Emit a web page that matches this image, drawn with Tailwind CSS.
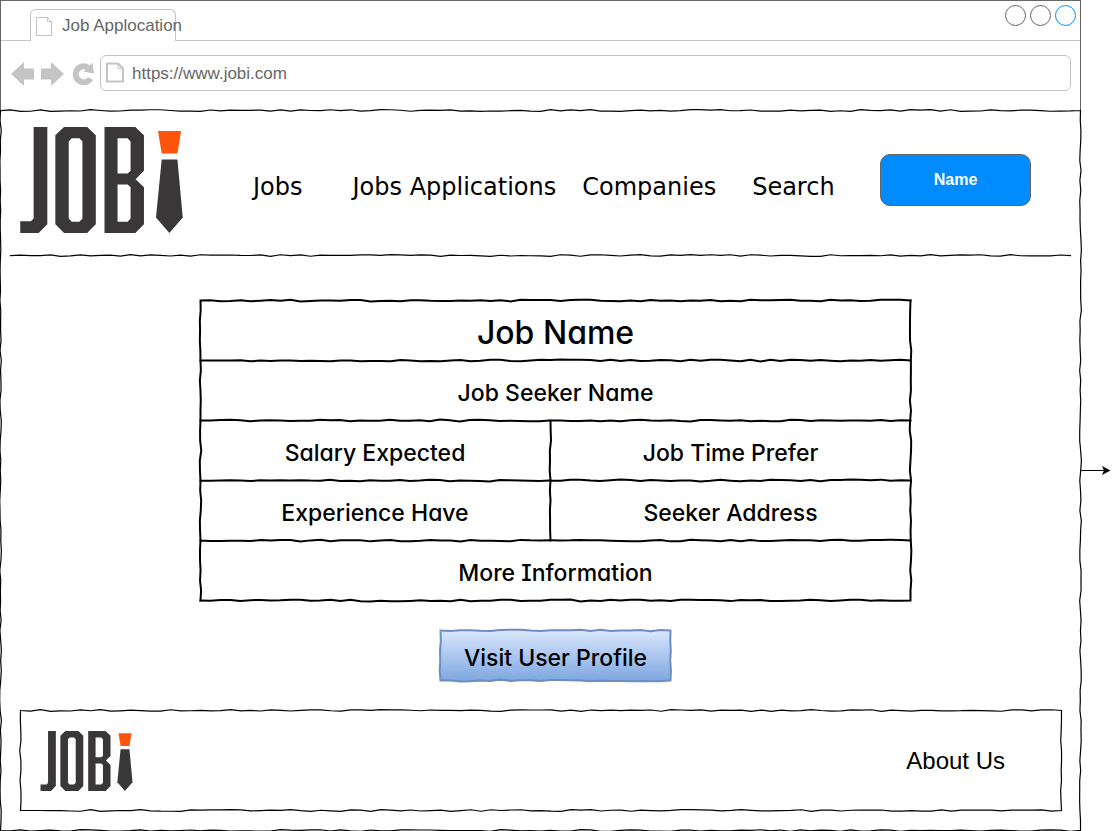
<!DOCTYPE html>
<html lang="en">
<head>
<meta charset="utf-8">
<meta name="viewport" content="width=device-width, initial-scale=1">
<title>Job Applocation</title>
<script src="https://cdn.jsdelivr.net/npm/@tailwindcss/browser@4"></script>
</head>
<body class="bg-white font-['Liberation_Sans',Arial,sans-serif] text-black">
<svg class="hidden" aria-hidden="true">
  <symbol id="logo" viewBox="60 50 486 317">
    <g fill="#393738">
      <path d="M100 50H141V341L115 367H60V332H92L100 324Z"/>
      <path fill-rule="evenodd" d="M191 50H260L286 75V341L260 367H191L165 341V75ZM214 84L205 93V324L214 333H237L246 324V93L237 84Z"/>
      <path fill-rule="evenodd" d="M312 50H404L430 75V181L405 206L430 230V341L404 367H312ZM351 84V189H381L390 181V93L381 84ZM351 222V333H381L390 324V230L381 222Z"/>
      <path d="M483 147H530L546 321L506 367L466 321Z"/>
    </g>
    <path fill="#ff540b" d="M472 62H541L530 129H483Z"/>
  </symbol>
</svg>
<div class="flex min-h-screen items-stretch">
  <div class="flex min-w-0 flex-1 flex-col">
    <header class="border border-b-0 border-[#666] text-[17px] leading-5 text-[#666]">
      <div class="flex h-10 items-end justify-between border-b border-[#c4c4c4] pl-[29px] pr-1">
        <div class="-mb-px flex h-8 w-[146px] items-center gap-2.5 rounded-t-md border border-b-0 border-[#c4c4c4] bg-white pl-[5px] whitespace-nowrap">
          <svg class="h-5 w-4 shrink-0" viewBox="0 0 16 20" fill="none" stroke="#c4c4c4"><path d="M.5 1.5H11.5L15.5 5.5V19.5H.5ZM11.5 1.5V5.5H15.5"/></svg>
          <span>Job Applocation</span>
        </div>
        <div class="flex gap-1 self-start pt-1">
          <button aria-label="Minimize" class="size-[21px] rounded-full border border-[#666]"></button>
          <button aria-label="Maximize" class="size-[21px] rounded-full border border-[#666]"></button>
          <button aria-label="Close" class="size-[21px] rounded-full border border-[#008cff]"></button>
        </div>
      </div>
      <div class="flex h-[69px] items-center pr-[9px] pb-1.5 pl-2.5">
        <button aria-label="Back" class="mr-[7px] shrink-0 pt-0.5"><svg class="h-[26px] w-[23px]" viewBox="0 0 23 26" fill="#c4c4c4"><path d="M0 13L13 1V7.500H23V18.500H13V25Z"/></svg></button>
        <button aria-label="Forward" class="mr-2 shrink-0 pt-0.5"><svg class="h-[26px] w-[23px]" viewBox="0 0 23 26" fill="#c4c4c4"><path d="M23 13L10 1V7.500H0V18.500H10V25Z"/></svg></button>
        <button aria-label="Reload" class="mr-1.5 shrink-0 pt-0.5"><svg class="h-[26px] w-[22px]" viewBox="0 0 22 26"><path d="M18.500 17.500A8 8 0 1 1 16 6.500" fill="none" stroke="#c4c4c4" stroke-width="6"/><path d="M20.500 1.500L22 12.500L11.500 10.500Z" fill="#c4c4c4"/></svg></button>
        <label class="flex h-9 min-w-0 flex-1 items-center gap-2 rounded-md border border-[#c4c4c4] pl-[5px]">
          <svg class="h-[21px] w-[18px] shrink-0" viewBox="0 0 18 21" fill="none" stroke="#c4c4c4"><path stroke-width="2" d="M1 1.500H12L17 6.500V19.500H1Z"/><path d="M12 1.500V6.500H17"/></svg>
          <input type="text" aria-label="Address" value="https://www.jobi.com" class="h-6 min-w-0 flex-1 bg-transparent pt-0.5 outline-none">
        </label>
      </div>
    </header>

    <div class="relative flex flex-1 flex-col px-2.5 pb-5" data-sketch="top left right bottom">
      <div class="relative flex h-[146px] items-center justify-between pr-10 pb-1.5 pl-2.5" data-sketch="bottom">
        <svg class="h-[106px] w-[163px] shrink-0" role="img" aria-label="Jobi"><use href="#logo"/></svg>
        <nav class="mr-auto ml-[70px] flex items-center pt-3.5 font-['DejaVu_Sans',Verdana,sans-serif] text-2xl whitespace-nowrap">
          <a href="#" class="mr-[50px]">Jobs</a>
          <a href="#" class="mr-[26px]">Jobs Applications</a>
          <a href="#" class="mr-9">Companies</a>
          <a href="#">Search</a>
        </nav>
        <button class="h-[52px] w-[151px] shrink-0 rounded-[10px] border border-[#666] bg-[#008cff] text-base font-bold text-white">Name</button>
      </div>

      <main class="flex flex-1 flex-col items-center pt-11 pl-[30px] font-['Comic_Sans_MS','Inter',sans-serif] text-[23px] font-medium [font-feature-settings:'cv11','cv08']">
        <div class="relative w-full max-w-[711px]" data-sketch="right bottom" data-weight="2">
          <table class="w-full table-fixed text-center">
            <colgroup><col class="w-[350px]"><col></colgroup>
            <tbody>
              <tr class="h-[60px]"><th colspan="2" class="relative pt-1.5 text-[32px] font-medium" data-sketch="top left" data-weight="2">Job Name</th></tr>
              <tr class="h-[60px]"><td colspan="2" class="relative pt-1.5" data-sketch="top left" data-weight="2">Job Seeker Name</td></tr>
              <tr class="h-[60px]"><td class="relative pt-1.5" data-sketch="top left" data-weight="2">Salary Expected</td><td class="relative pt-1.5" data-sketch="top left" data-weight="2">Job Time Prefer</td></tr>
              <tr class="h-[60px]"><td class="relative pt-1.5" data-sketch="top left" data-weight="2">Experience Have</td><td class="relative pt-1.5" data-sketch="top left" data-weight="2">Seeker Address</td></tr>
              <tr class="h-[60px]"><td colspan="2" class="relative pt-1.5" data-sketch="top left" data-weight="2">More Information</td></tr>
            </tbody>
          </table>
        </div>
        <button class="relative mt-[30px] h-[51px] w-[231px] bg-linear-to-b from-[#dae8fc] to-[#7ea6e0] pt-1.5 whitespace-nowrap" data-sketch="top right bottom left" data-weight="2" data-color="#6c8ebf">Visit User Profile</button>
      </main>

      <footer class="relative mr-[9px] ml-2.5 flex h-[101px] items-center justify-between pr-[57px] pl-5 text-2xl" data-sketch="top right bottom left">
        <svg class="h-[60px] w-[93px]" role="img" aria-label="Jobi"><use href="#logo"/></svg>
        <a href="#">About Us</a>
      </footer>
    </div>
  </div>
  <div class="flex w-[38px] shrink-0 flex-col pt-[465px]">
    <svg class="h-3 w-[30px]" viewBox="0 0 30 12"><path d="M0 5.500H24" stroke="#000"/><path d="M29.500 5.500L21 10L23 5.500L21 1Z"/></svg>
  </div>
</div>
<script>
  // Hand-drawn borders: each listed side becomes a slightly wavering line.
  const NS = 'http://www.w3.org/2000/svg';
  let seed = 1;
  const rand = () => (seed = (seed * 16807) % 2147483647) / 2147483647;
  function wavy(x1, y1, x2, y2) {
    const n = Math.max(1, Math.round(Math.hypot(x2 - x1, y2 - y1) / 10));
    const horizontal = y1 === y2;
    let d = `M${x1} ${y1}`;
    for (let i = 1; i <= n; i++) {
      const j = i === n ? 0 : (rand() - 0.5) * 1.8;
      const x = x1 + (x2 - x1) * i / n + (horizontal ? 0 : j);
      const y = y1 + (y2 - y1) * i / n + (horizontal ? j : 0);
      d += `L${x.toFixed(2)} ${y.toFixed(2)}`;
    }
    return d;
  }
  function drawBorder(el, path, index) {
    seed = 7919 * (index + 3);
    const { width, height } = el.getBoundingClientRect();
    const a = 0.5;
    const w = width - 0.5;
    const h = el.tagName === 'DIV' && el.dataset.weight ? height + 0.5 : height - 0.5;
    const bottom = el.tagName === 'TD' || el.tagName === 'TH' ? h + 1 : h;
    const sides = { top: [a, a, w, a], right: [w, a, w, bottom], bottom: [a, h, w, h], left: [a, a, a, bottom] };
    path.setAttribute('d', el.dataset.sketch.split(' ').map(s => wavy(...sides[s])).join(''));
  }
  document.querySelectorAll('[data-sketch]').forEach((el, index) => {
    const svg = document.createElementNS(NS, 'svg');
    svg.setAttribute('class', 'pointer-events-none absolute inset-0 size-full overflow-visible');
    const path = document.createElementNS(NS, 'path');
    path.setAttribute('fill', 'none');
    path.setAttribute('stroke', el.dataset.color || '#000');
    path.setAttribute('stroke-linecap', 'square');
    path.setAttribute('stroke-width', el.dataset.weight || 1.2);
    svg.append(path);
    el.append(svg);
    drawBorder(el, path, index);
    new ResizeObserver(() => drawBorder(el, path, index)).observe(el, { box: 'border-box' });
  });
</script>
</body>
</html>
